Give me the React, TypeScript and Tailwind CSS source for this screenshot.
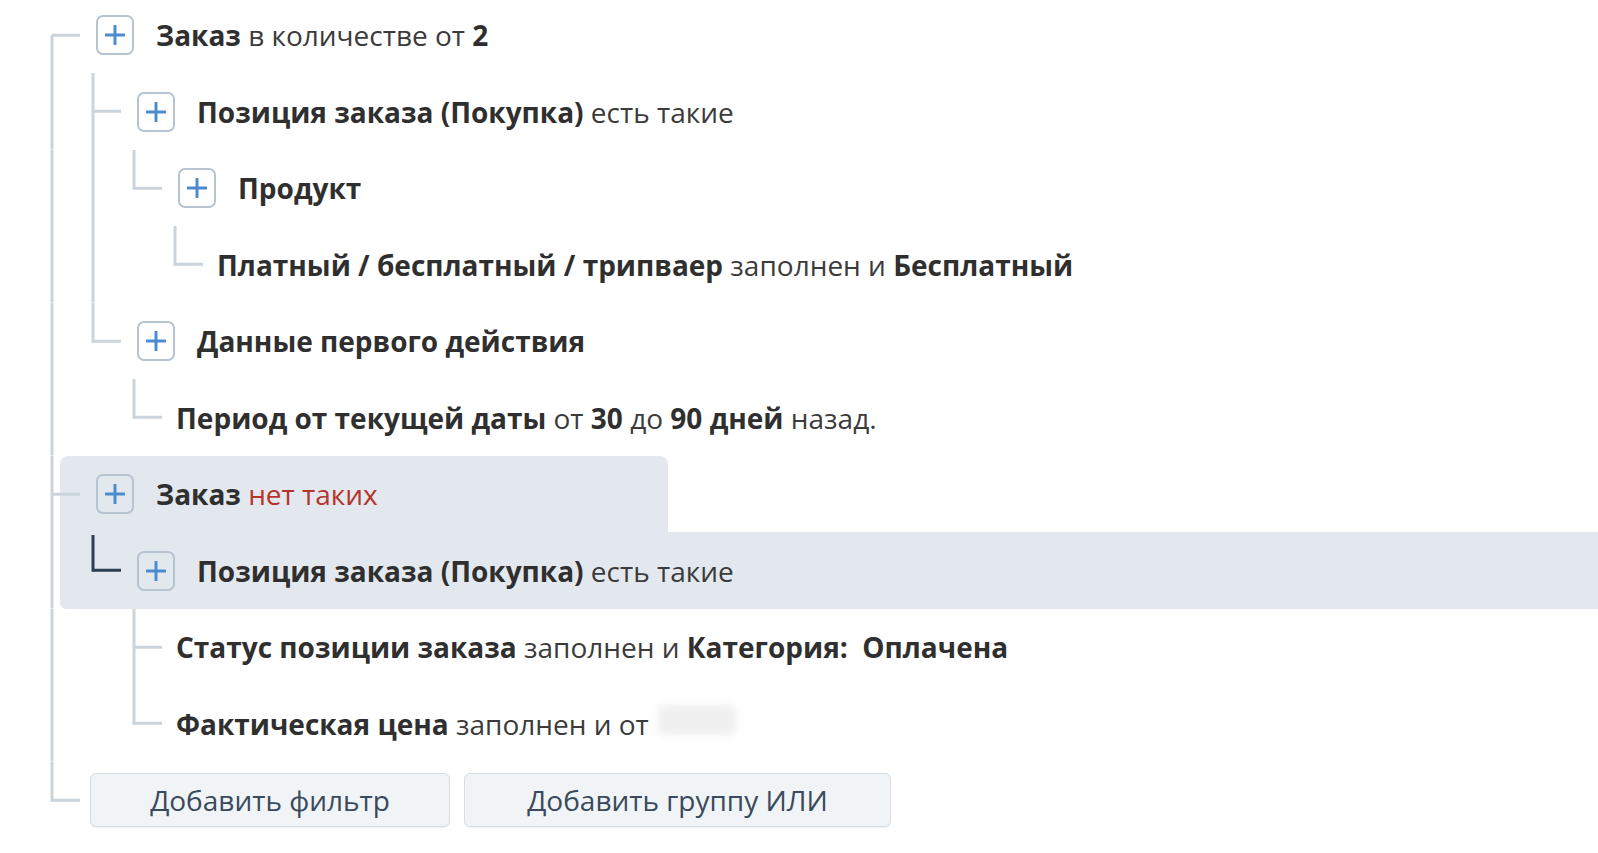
import type { ReactNode } from 'react';

const STEP = 41;
const ROW_H = 76.5;
const LINE = '#cbd3db';

type Kind = 'start' | 'tee' | 'end';

type Row = {
  level: number;
  pipes: number[];
  kind: Kind;
  icon?: boolean;
  dark?: boolean;
  tone?: 'head' | 'strip';
  content: ReactNode;
};

// draws the tree connectors of one row, cut to the [from, to] slice
function Gutter({ row, from, to }: { row: Row; from: number; to: number }) {
  const mid = ROW_H / 2;
  const x = row.level * STEP + 20;
  const color = row.dark ? '#2e3f52' : LINE;
  const y1 = row.kind === 'start' ? mid : 0;
  const y2 = row.kind === 'end' ? mid : ROW_H;
  return (
    <svg
      width={to - from}
      height={ROW_H}
      viewBox={`${from} 0 ${to - from} ${ROW_H}`}
      className="shrink-0"
    >
      {row.pipes.map((c) => (
        <line key={c} x1={c * STEP + 20} y1={0} x2={c * STEP + 20} y2={ROW_H} stroke={LINE} strokeWidth={3} />
      ))}
      <line x1={x} y1={row.dark ? y1 + 3 : y1} x2={x} y2={y2 + 1.5} stroke={color} strokeWidth={3} />
      <line x1={x} y1={mid} x2={x + 28} y2={mid} stroke={color} strokeWidth={3} />
    </svg>
  );
}

function PlusBox() {
  return (
    <span className="mr-[22px] flex h-[40px] w-[38px] shrink-0 items-center justify-center rounded-[7px] border-2 border-[#b7c3d1]">
      <svg width="20" height="20" viewBox="0 0 20 20">
        <path d="M10 1v18M1 10h18" stroke="#4d8bd0" strokeWidth="3" strokeLinecap="round" />
      </svg>
    </span>
  );
}

const B = ({ children }: { children: ReactNode }) => <b className="font-bold text-[#2f2f2f]">{children}</b>;

const rows: Row[] = [
  {
    level: 0, pipes: [], kind: 'start', icon: true,
    content: <><B>Заказ</B> в количестве от <B>2</B></>,
  },
  {
    level: 1, pipes: [0], kind: 'tee', icon: true,
    content: <><B>Позиция заказа (Покупка)</B> есть такие</>,
  },
  {
    level: 2, pipes: [0, 1], kind: 'end', icon: true,
    content: <B>Продукт</B>,
  },
  {
    level: 3, pipes: [0, 1], kind: 'end',
    content: <><B>Платный / бесплатный / трипваер</B> заполнен и <B>Бесплатный</B></>,
  },
  {
    level: 1, pipes: [0], kind: 'end', icon: true,
    content: <B>Данные первого действия</B>,
  },
  {
    level: 2, pipes: [0], kind: 'end',
    content: <><B>Период от текущей даты</B> от <B>30</B> до <B>90 дней</B> назад.</>,
  },
  {
    level: 0, pipes: [], kind: 'tee', icon: true, tone: 'head',
    content: <><B>Заказ</B> <span className="text-[#b5342c]">нет таких</span></>,
  },
  {
    level: 1, pipes: [0], kind: 'end', icon: true, dark: true, tone: 'strip',
    content: <><B>Позиция заказа (Покупка)</B> есть такие</>,
  },
  {
    level: 2, pipes: [0], kind: 'tee',
    content: <><B>Статус позиции заказа</B> заполнен и <B>Категория:&nbsp; Оплачена</B></>,
  },
  {
    level: 2, pipes: [0], kind: 'end',
    content: (
      <>
        <B>Фактическая цена</B> заполнен и от
        <span className="ml-[9px] inline-block h-[30px] w-[78px] rounded-md bg-[#efefef] blur-[4px]" />
      </>
    ),
  },
];

function TreeRow({ row }: { row: Row }) {
  const start = row.level * STEP + (row.icon ? 64 : 62);
  const tone =
    row.tone === 'head'
      ? 'w-[608px] rounded-t-lg bg-[#e3e8ef]'
      : row.tone === 'strip'
      ? 'flex-1 rounded-bl-md bg-[#e3e8ef]'
      : 'flex-1';
  return (
    <div className="flex h-[76.5px]">
      <Gutter row={row} from={0} to={28} />
      <div className={`flex items-center ${tone}`}>
        <Gutter row={row} from={28} to={start} />
        {row.icon && <PlusBox />}
        <span className="whitespace-nowrap">{row.content}</span>
      </div>
    </div>
  );
}

export default function App() {
  const last: Row = { level: 0, pipes: [], kind: 'end', content: null };
  return (
    <div className="min-h-screen overflow-hidden bg-white font-['Open_Sans','Noto_Sans',sans-serif] text-[28px] text-[#3b3b3b]">
      <div className="mt-[-3.25px] pl-[32px]">
        {rows.map((r, i) => (
          <TreeRow key={i} row={r} />
        ))}
        <div className="flex h-[76.5px] items-center">
          <Gutter row={last} from={0} to={58} />
          <div className="flex gap-[14px]">
            <button className="h-[54px] w-[360px] rounded-md border border-[#d6dde5] bg-[#f1f4f7] text-[#3a4a5c] shadow-[0_1px_1px_rgba(0,0,0,0.06)]">
              Добавить фильтр
            </button>
            <button className="h-[54px] w-[427px] rounded-md border border-[#d6dde5] bg-[#f1f4f7] text-[#3a4a5c] shadow-[0_1px_1px_rgba(0,0,0,0.06)]">
              Добавить группу ИЛИ
            </button>
          </div>
        </div>
      </div>
    </div>
  );
}
